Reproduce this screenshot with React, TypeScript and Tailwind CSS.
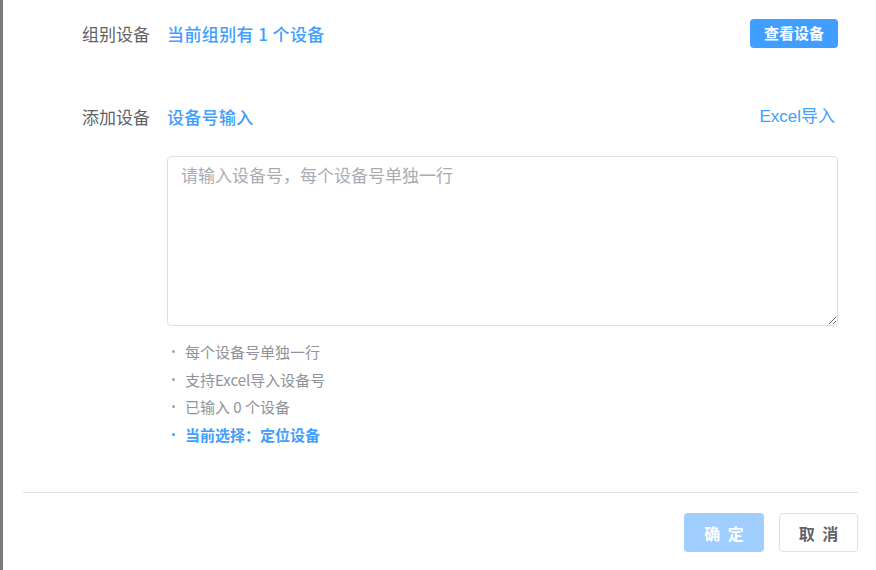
const cjk = "font-['Noto_Sans_CJK_SC','Noto_Sans',sans-serif]";

const hints = [
  { text: '每个设备号单独一行', active: false },
  { text: '支持Excel导入设备号', active: false },
  { text: '已输入 0 个设备', active: false },
  { text: '当前选择：定位设备', active: true },
];

export default function App() {
  return (
    <div className={`flex h-[570px] w-[876px] overflow-hidden bg-white ${cjk}`}>
      <div className="w-[3px] shrink-0 bg-[#7b7b7b]" />
      <div className="flex flex-1 flex-col">
        {/* form body */}
        <div className="pl-[79px] pr-[38px]">
          <div className="mt-[19px] flex h-[29px] items-center">
            <span className="w-[85px] text-[17px] text-[#606266]">组别设备</span>
            <span className="text-[17px] font-medium tracking-[0.4px] text-[#409eff]">当前组别有 1 个设备</span>
            <button className="ml-auto h-[29px] w-[88px] rounded-[4px] bg-[#409eff] text-[15px] font-bold text-white">
              查看设备
            </button>
          </div>

          <div className="mt-[54px] flex h-[30px] items-center">
            <span className="w-[85px] text-[17px] text-[#606266]">添加设备</span>
            <span className="text-[17px] font-medium tracking-[0.3px] text-[#409eff]">设备号输入</span>
            <span className="ml-auto mr-[3px] font-['Liberation_Sans','Noto_Sans_CJK_SC',sans-serif] text-[17px] text-[#409eff]">
              Excel导入
            </span>
          </div>

          <div className="mt-[24px] pl-[85px]">
            <textarea
              className="block h-[170px] w-full rounded-[4px] border border-[#dcdfe6] px-[13px] py-[5px] text-[17px] text-[#606266] outline-none placeholder:text-[#a8abb2]"
              placeholder="请输入设备号，每个设备号单独一行"
            />
            <ul className="mt-[12px] text-[15px] leading-[27.6px]">
              {hints.map((h) => (
                <li
                  key={h.text}
                  className={`flex items-center ${h.active ? 'font-bold text-[#409eff]' : 'text-[#909399]'}`}
                >
                  <span
                    className={`ml-[5px] mr-[10px] h-[3px] w-[3px] rounded-full ${h.active ? 'bg-[#409eff]' : 'bg-[#a0a3aa]'}`}
                  />
                  {h.text}
                </li>
              ))}
            </ul>
          </div>
        </div>

        {/* footer */}
        <div className="ml-[20px] mr-[18px] mt-[44px] border-t border-[#dcdfe6]" />
        <div className="mr-[18px] mt-[20px] flex justify-end gap-[15px]">
          <button className="h-[39px] w-[80px] rounded-[4px] bg-[#a0cfff] pl-[2px] text-[16px] font-bold tracking-[2px] text-white">
            确 定
          </button>
          <button className="h-[39px] w-[79px] rounded-[4px] border border-[#dcdfe6] bg-white pl-[2px] text-[16px] font-bold tracking-[2px] text-[#606266]">
            取 消
          </button>
        </div>
      </div>
    </div>
  );
}
